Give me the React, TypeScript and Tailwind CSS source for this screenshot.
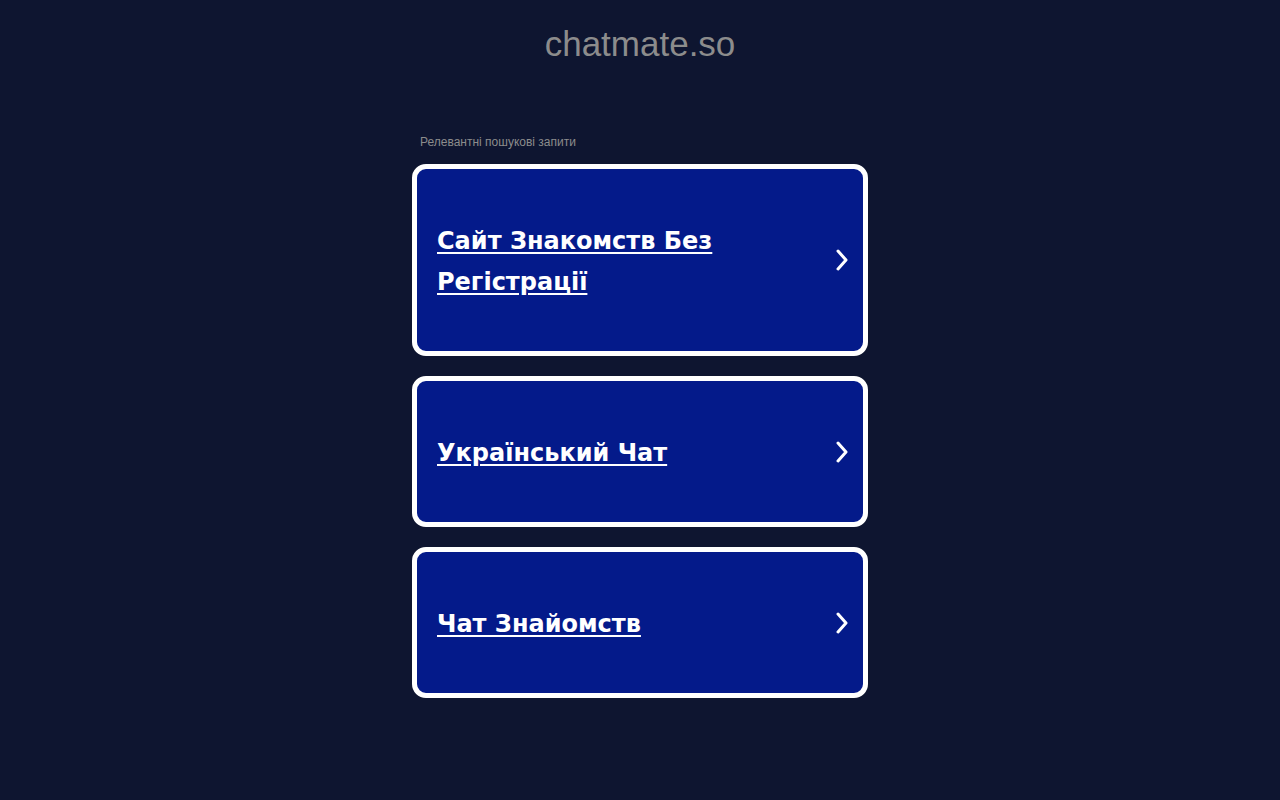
import React from 'react';

const links = ['Сайт Знакомств Без Регістрації', 'Український Чат', 'Чат Знайомств'];

function Chevron() {
  return (
    <svg width="14" height="22" viewBox="0 0 14 22" fill="none" className="shrink-0">
      <path d="M3 2l8 9-8 9" stroke="white" strokeWidth="3" strokeLinecap="round" strokeLinejoin="round" />
    </svg>
  );
}

export default function App() {
  return (
    <div className="min-h-screen bg-[#0e1530] flex flex-col items-center" style={{ fontFamily: '"Liberation Sans", Arial, sans-serif' }}>
      <div className="pt-[23px] text-[35px] leading-[42px] text-[#8c8c8c]">chatmate.so</div>
      <div className="w-[456px] mt-[70px]">
        <div className="pl-2 text-[12px] leading-[14px] text-[#8c8c8c]">Релевантні пошукові запити</div>
        <div className="mt-[15px] flex flex-col gap-[20px]">
          {links.map((l) => (
            <a
              key={l}
              href="#"
              className="flex items-center justify-between border-[5px] border-white rounded-[14px] bg-[#041a8a] pl-[20px] pr-[14px] py-[48px]"
            >
              <span
                className="max-w-[340px] pt-[4px] text-white font-bold text-[24px] leading-[41px] underline underline-offset-[3px]"
                style={{ fontFamily: '"DejaVu Sans", sans-serif' }}
              >
                {l}
              </span>
              <Chevron />
            </a>
          ))}
        </div>
      </div>
    </div>
  );
}
